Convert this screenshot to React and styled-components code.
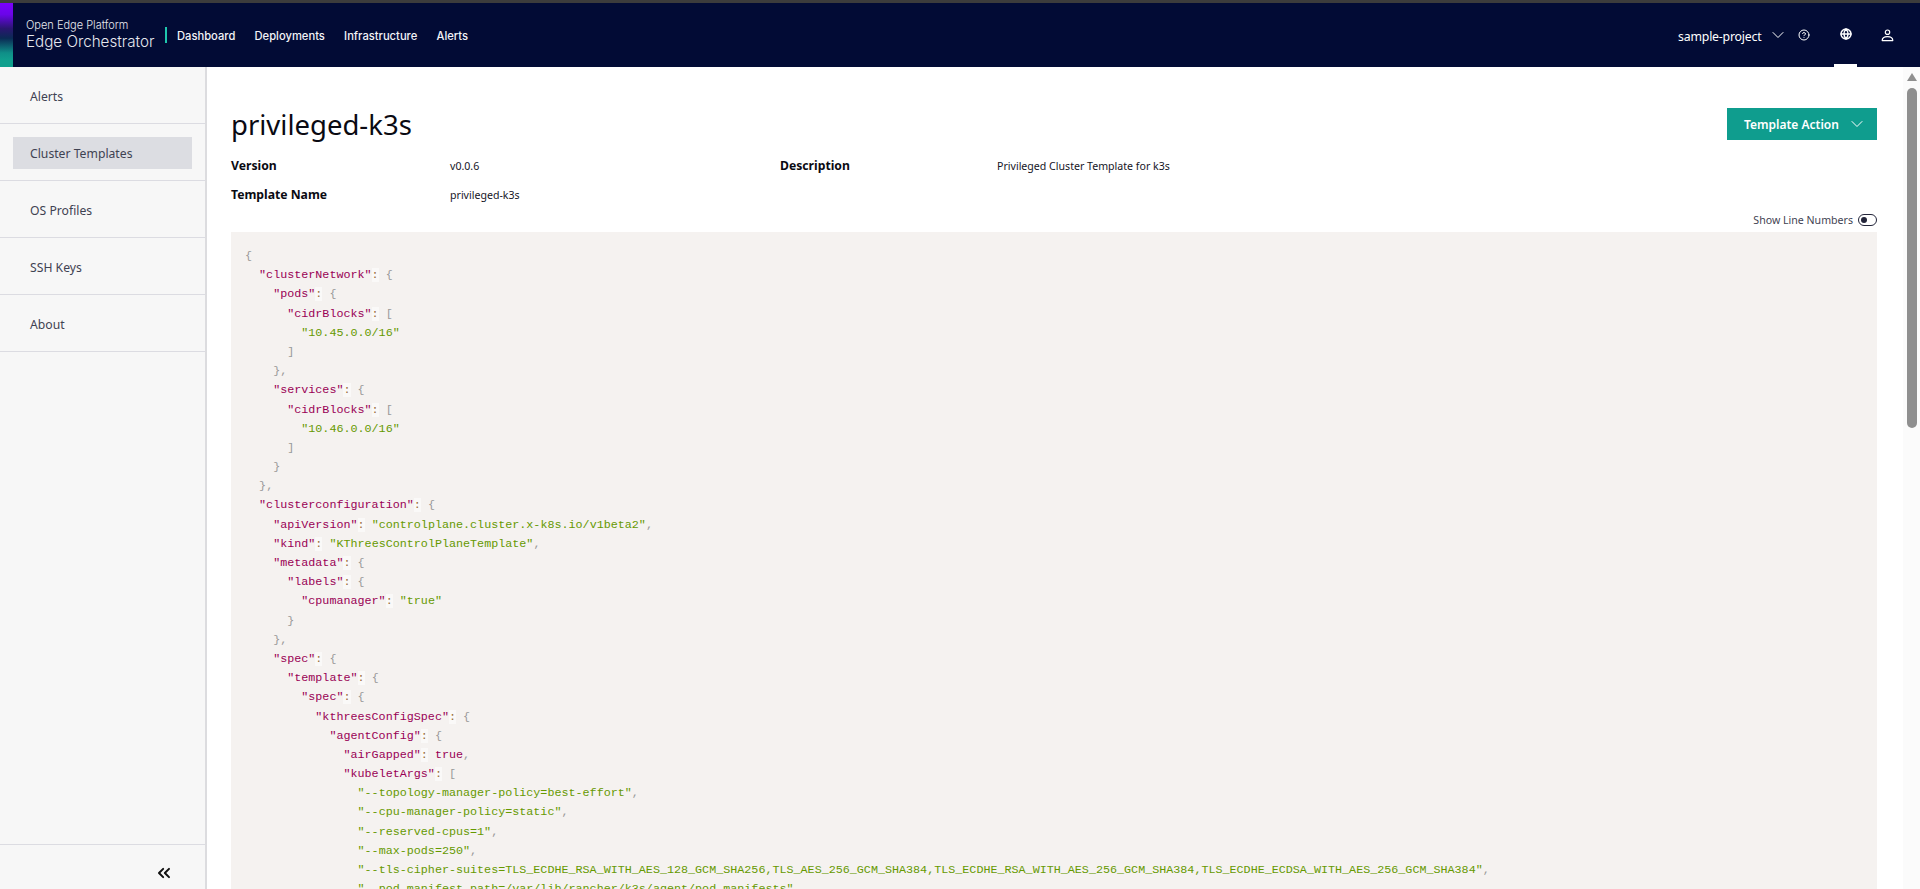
import React from "react";
import styled, { createGlobalStyle } from "styled-components";
import { ChevronDown, ChevronsLeft, CircleHelp, Globe } from "lucide-react";

const NAV = ["Dashboard", "Deployments", "Infrastructure", "Alerts"];
const SIDE = ["Alerts", "Cluster Templates", "OS Profiles", "SSH Keys", "About"];

const CODE = `{
  "clusterNetwork": {
    "pods": {
      "cidrBlocks": [
        "10.45.0.0/16"
      ]
    },
    "services": {
      "cidrBlocks": [
        "10.46.0.0/16"
      ]
    }
  },
  "clusterconfiguration": {
    "apiVersion": "controlplane.cluster.x-k8s.io/v1beta2",
    "kind": "KThreesControlPlaneTemplate",
    "metadata": {
      "labels": {
        "cpumanager": "true"
      }
    },
    "spec": {
      "template": {
        "spec": {
          "kthreesConfigSpec": {
            "agentConfig": {
              "airGapped": true,
              "kubeletArgs": [
                "--topology-manager-policy=best-effort",
                "--cpu-manager-policy=static",
                "--reserved-cpus=1",
                "--max-pods=250",
                "--tls-cipher-suites=TLS_ECDHE_RSA_WITH_AES_128_GCM_SHA256,TLS_AES_256_GCM_SHA384,TLS_ECDHE_RSA_WITH_AES_256_GCM_SHA384,TLS_ECDHE_ECDSA_WITH_AES_256_GCM_SHA384",
                "--pod-manifest-path=/var/lib/rancher/k3s/agent/pod-manifests"`;

// splits one json line into prism style tokens
const tokenize = (line) => {
  const out = [];
  const re = /("[^"]*")(\s*:)?|(\btrue\b|\bfalse\b)|([{}\[\],])/g;
  let last = 0;
  let m;
  while ((m = re.exec(line))) {
    if (m.index > last) out.push(["plain", line.slice(last, m.index)]);
    if (m[1]) {
      out.push([m[2] ? "property" : "string", m[1]]);
      if (m[2]) out.push(["operator", ":"]);
    } else if (m[3]) out.push(["boolean", m[3]]);
    else out.push(["punctuation", m[4]]);
    last = re.lastIndex;
  }
  if (last < line.length) out.push(["plain", line.slice(last)]);
  return out;
};

const PersonIcon = () => (
  <svg width="13" height="13" viewBox="0 0 13 13" fill="none" stroke="currentColor" strokeWidth="1.2">
    <circle cx="6.5" cy="3.2" r="2.2" />
    <path d="M1.2 11.6c0-2.6 2-4 5.3-4s5.3 1.4 5.3 4z" strokeLinejoin="round" />
  </svg>
);

const App = () => {
  return (
    <>
      <Global />
      <Page>
        <Header>
          <Strip />
          <Brand>
            <BrandTop>Open Edge Platform</BrandTop>
            <BrandName>Edge Orchestrator</BrandName>
          </Brand>
          <BrandBar />
          <Nav>
            {NAV.map((n) => (
              <NavLink key={n}>{n}</NavLink>
            ))}
          </Nav>
          <HeaderRight>
            <Project>sample-project</Project>
            <ChevronDown size={20} strokeWidth={1.2} />
            <HelpIcon><CircleHelp size={12} strokeWidth={2} /></HelpIcon>
            <GlobeTab><Globe size={12} strokeWidth={3} /></GlobeTab>
            <UserIcon><PersonIcon /></UserIcon>
          </HeaderRight>
        </Header>
        <Body>
          <Sidebar>
            <SideList>
              {SIDE.map((s) => (
                <SideRow key={s}>
                  <SideItem $active={s === "Cluster Templates"}>{s}</SideItem>
                </SideRow>
              ))}
            </SideList>
            <SideFooter>
              <ChevronsLeft size={20} strokeWidth={2.4} />
            </SideFooter>
          </Sidebar>
          <Main>
            <TitleRow>
              <Title>privileged-k3s</Title>
              <ActionBtn>
                Template Action
                <ChevronDown size={20} strokeWidth={1.2} />
              </ActionBtn>
            </TitleRow>
            <Details>
              <Label>Version</Label>
              <Value>v0.0.6</Value>
              <Label>Description</Label>
              <Value>Privileged Cluster Template for k3s</Value>
              <Label>Template Name</Label>
              <Value>privileged-k3s</Value>
            </Details>
            <ToggleRow>
              Show Line Numbers
              <Toggle />
            </ToggleRow>
            <CodeBlock>
              {CODE.split("\n").map((line, i) => (
                <CodeLine key={i}>
                  {tokenize(line).map(([kind, text], j) => (
                    <Token key={j} $kind={kind}>{text}</Token>
                  ))}
                </CodeLine>
              ))}
            </CodeBlock>
          </Main>
          <ScrollRail>
            <ScrollArrow />
            <ScrollThumb />
          </ScrollRail>
        </Body>
      </Page>
    </>
  );
};

export default App;

const Global = createGlobalStyle`
  html, body {
    margin: 0;
    height: 100%;
    overflow: hidden;
    background: #fff;
  }
  body {
    font-family: "Noto Sans", "Open Sans", sans-serif;
  }
  #root {
    height: 100%;
  }
`;

const Page = styled.div`
  height: 889px;
  display: flex;
  flex-direction: column;
`;

const Header = styled.header`
  height: 64px;
  border-top: 3px solid #3c3c3c;
  background: #020b35;
  display: flex;
  align-items: center;
  color: #fff;
  flex-shrink: 0;
`;

const Strip = styled.div`
  width: 13px;
  height: 100%;
  background: linear-gradient(180deg, #7b00ff 0%, #6a05e8 18%, #2a1670 40%, #0b2a55 55%, #0f8f88 78%, #10a08e 90%);
`;

const Brand = styled.div`
  margin-left: 13px;
  width: 141px;
  font-family: Inter, "Noto Sans", sans-serif;
  color: #e6e8ee;
`;

const BrandTop = styled.div`
  font-size: 11px;
  font-weight: 300;
  line-height: 14px;
`;

const BrandName = styled.div`
  font-size: 15.2px;
  font-weight: 300;
  line-height: 20px;
`;

const BrandBar = styled.div`
  width: 2px;
  height: 16px;
  margin-left: -2px;
  background: #1fc7ae;
`;

const Nav = styled.nav`
  display: flex;
  gap: 19.2px;
  margin: 2px 0 0 10px;
`;

const NavLink = styled.a`
  font-family: Inter, "Noto Sans", sans-serif;
  font-size: 11.2px;
  font-weight: 500;
  color: #f2f3f7;
`;

const HeaderRight = styled.div`
  margin-left: auto;
  display: flex;
  align-items: center;
  height: 100%;
  padding-right: 26px;
`;

const Project = styled.span`
  font-size: 12.3px;
  margin: 2px 6px 0 0;
  letter-spacing: -0.2px;
`;

const HelpIcon = styled.span`
  display: flex;
  margin-left: 10.5px;
`;

const GlobeTab = styled.span`
  width: 23px;
  height: 100%;
  margin-left: 24px;
  display: flex;
  align-items: center;
  justify-content: center;
  box-sizing: border-box;
  border-bottom: 3px solid #fff;
`;

const UserIcon = styled.span`
  display: flex;
  margin-left: 24px;
`;

const Body = styled.div`
  flex: 1;
  display: flex;
  min-height: 0;
`;

const Sidebar = styled.aside`
  width: 205px;
  flex-shrink: 0;
  background: #f7f7f7;
  border-right: 2px solid #dcdcdf;
  display: flex;
  flex-direction: column;
`;

const SideList = styled.div`
  flex: 1;
`;

const SideRow = styled.div`
  height: 57px;
  box-sizing: border-box;
  border-bottom: 1px solid #dcdce2;
  padding: 1px 13px 0;
  display: flex;
  align-items: center;
`;

const SideItem = styled.div`
  width: 100%;
  height: 32px;
  line-height: 34px;
  padding-left: 17px;
  box-sizing: border-box;
  font-size: 12.2px;
  color: #3f4252;
  background: ${(p) => (p.$active ? "#dcdde2" : "transparent")};
`;

const SideFooter = styled.div`
  height: 45px;
  box-sizing: border-box;
  border-top: 1px solid #dcdce2;
  display: flex;
  align-items: flex-end;
  justify-content: flex-end;
  padding: 0 31px 6px 0;
  color: #111;
`;

const Main = styled.main`
  flex: 1;
  min-width: 0;
  overflow: hidden;
  padding: 33px 26px 0 24px;
`;

const ScrollRail = styled.div`
  width: 17px;
  flex-shrink: 0;
  background: #fbfbfb;
  display: flex;
  flex-direction: column;
  align-items: center;
`;

const ScrollArrow = styled.div`
  margin-top: 6px;
  width: 0;
  height: 0;
  border-left: 5.5px solid transparent;
  border-right: 5.5px solid transparent;
  border-bottom: 8px solid #8f8f8f;
`;

const ScrollThumb = styled.div`
  margin-top: 7px;
  width: 10px;
  height: 340px;
  border-radius: 5px;
  background: #8f8f8f;
`;

const TitleRow = styled.div`
  display: flex;
  justify-content: space-between;
  align-items: center;
  height: 48px;
`;

const Title = styled.h1`
  margin: 0;
  font-size: 27.5px;
  font-weight: 400;
  color: #0a0a12;
`;

const ActionBtn = styled.button`
  width: 150px;
  height: 32px;
  border: 0;
  padding: 0 0 0 17px;
  background: #0f9d8e;
  color: #fff;
  font: 600 12px "Noto Sans", sans-serif;
  display: flex;
  align-items: center;
  gap: 8px;
`;

const Details = styled.div`
  display: grid;
  grid-template-columns: 219px 330px 217px 1fr;
  grid-auto-rows: 29px;
  align-items: center;
  margin-top: 3px;
`;

const Label = styled.div`
  font-size: 12.2px;
  font-weight: 700;
  color: #0a0a12;
`;

const Value = styled.div`
  font-size: 10.6px;
  color: #15151f;
`;

const ToggleRow = styled.div`
  display: flex;
  justify-content: flex-end;
  align-items: center;
  gap: 5px;
  margin-top: 4px;
  font-size: 10.6px;
  color: #3f4252;
  height: 14px;
`;

const Toggle = styled.span`
  width: 19px;
  height: 12px;
  box-sizing: border-box;
  border: 1px solid #23253a;
  border-radius: 6px;
  position: relative;

  &::after {
    content: "";
    position: absolute;
    left: 2px;
    top: 2px;
    width: 6px;
    height: 6px;
    border-radius: 50%;
    background: #23253a;
  }
`;

const CodeBlock = styled.pre`
  margin: 5px 0 0;
  padding: 15px 14px;
  min-height: 700px;
  background: #f5f2f0;
  font-family: "Liberation Mono", "DejaVu Sans Mono", monospace;
  font-size: 11.73px;
  line-height: 19.2px;
  color: #000;
`;

const CodeLine = styled.div`
  height: 19.2px;
`;

const TOKEN_COLORS = {
  plain: "#000",
  property: "#990055",
  boolean: "#990055",
  string: "#669900",
  operator: "#9a6e3a",
  punctuation: "#999999",
};

const Token = styled.span`
  color: ${(p) => TOKEN_COLORS[p.$kind]};
  background: ${(p) => (p.$kind === "operator" ? "rgba(255,255,255,0.5)" : "transparent")};
`;
